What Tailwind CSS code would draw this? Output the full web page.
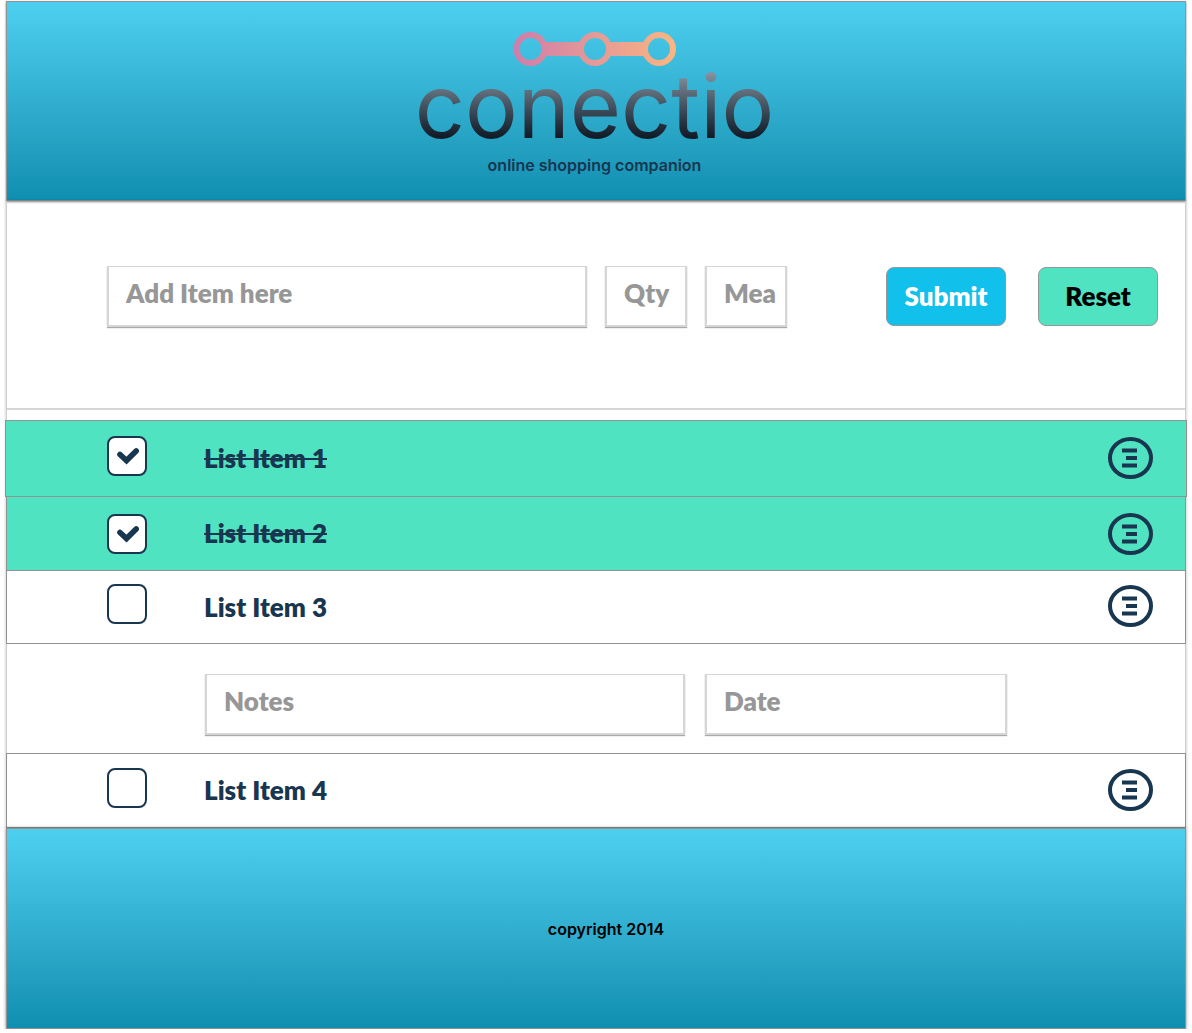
<!DOCTYPE html>
<html lang="en">
<head>
<meta charset="utf-8">
<meta name="viewport" content="width=device-width, initial-scale=1">
<title>conectio - online shopping companion</title>
<script src="https://cdn.jsdelivr.net/npm/@tailwindcss/browser@4"></script>
</head>
<body class="bg-white px-1.5 pt-px font-['Lato',sans-serif] text-[#183650]">
<svg class="hidden" aria-hidden="true">
  <symbol id="tick" viewBox="0 0 24 24"><path d="M5 10.500 11.500 16.600 21.200 7" fill="none" stroke="#183650" stroke-width="5.600" stroke-linecap="round"/></symbol>
  <symbol id="details" viewBox="0 0 45 42"><ellipse cx="22.500" cy="21" rx="20.500" ry="19" fill="none" stroke="#183650" stroke-width="4"/><path d="M14 13.500h15M18 21h11M14 28.500h15" fill="none" stroke="#183650" stroke-width="4"/></symbol>
</svg>

<header class="flex h-50 flex-col items-center border border-[#929292] bg-linear-to-b from-[#4dd0f0] to-[#0f8fb0] pt-[29px] pr-[3px] shadow-[0_1px_2px_rgba(0,0,0,0.5)]">
  <svg class="h-9 w-[164px] shrink-0" viewBox="0 0 164 36" aria-hidden="true">
    <defs><linearGradient id="link" gradientUnits="userSpaceOnUse" x1="0" y1="0" x2="164" y2="0"><stop offset="0" stop-color="#cf7dab"/><stop offset="1" stop-color="#fbb681"/></linearGradient></defs>
    <g fill="none" stroke="url(#link)" stroke-width="6">
      <circle cx="17.500" cy="18" r="14"/><circle cx="82" cy="18" r="14"/><circle cx="146" cy="18" r="14"/>
    </g>
    <path fill="url(#link)" d="M31 11h37a16 16 0 0 0 0 14h-37a16 16 0 0 0 0-14zM96 11h36a16 16 0 0 0 0 14h-36a16 16 0 0 0 0-14z"/>
  </svg>
  <h1 class="bg-linear-to-b from-[#8997a5] from-5% to-[#101c28] to-90% bg-clip-text text-[88px] leading-[78px] font-[370] text-transparent font-['Inter',sans-serif]">conectio</h1>
  <p class="mt-2 text-base leading-6 font-semibold font-['Inter',sans-serif]">online shopping companion</p>
</header>

<main class="border-x border-[#cfcfcf] shadow-[0_0_3px_rgba(0,0,0,0.25)]">
  <form class="flex h-[209px] items-start gap-[18px] border-b-2 border-[#d6d6d6] pt-[65px] pr-[27px] pl-[100px] text-[26px] font-extrabold">
    <input aria-label="Add item" placeholder="Add Item here" class="h-[61px] min-w-0 flex-1 border-2 border-t border-[#d6d6d6] pb-1.5 pl-[17px] shadow-[0_1px_1px_#aaa] placeholder:text-[#979797]">
    <input aria-label="Quantity" placeholder="Qty" class="h-[61px] w-[82px] border-2 border-t border-[#d6d6d6] pb-1.5 pl-[17px] shadow-[0_1px_1px_#aaa] placeholder:text-[#979797]">
    <input aria-label="Measure" placeholder="Mea" class="h-[61px] w-[82px] border-2 border-t border-[#d6d6d6] pb-1.5 pl-[17px] shadow-[0_1px_1px_#aaa] placeholder:text-[#979797]">
    <div class="ml-[81px] flex gap-8 pt-px">
      <button type="submit" class="h-[59px] w-[120px] rounded-lg border border-[#979797] bg-[#12c0ec] text-white">Submit</button>
      <button type="reset" class="h-[59px] w-[120px] rounded-lg border border-[#979797] bg-[#50e3c2] text-black">Reset</button>
    </div>
  </form>

  <ul class="mt-2.5 text-[26px] font-extrabold">
    <li class="-mx-0.5 flex h-[77px] items-center border border-[#929292] bg-[#50e3c2] pr-[33px] pl-[101px]">
      <span class="mb-1.5 grid place-items-center"><input id="item1" type="checkbox" checked class="col-start-1 row-start-1 size-10 appearance-none rounded-lg border-2 border-[#183650] bg-white"><svg class="pointer-events-none col-start-1 row-start-1 size-6" aria-hidden="true"><use href="#tick"/></svg></span>
      <label for="item1" class="ml-[57px] line-through decoration-2">List Item 1</label>
      <button type="button" aria-label="Details of item 1" class="mb-0.5 ml-auto"><svg class="h-[42px] w-[45px]"><use href="#details"/></svg></button>
    </li>
    <li class="-mx-px flex h-[74px] items-center border border-t-0 border-[#929292] bg-[#50e3c2] pr-8 pl-[100px]">
      <span class="grid place-items-center"><input id="item2" type="checkbox" checked class="col-start-1 row-start-1 size-10 appearance-none rounded-lg border-2 border-[#183650] bg-white"><svg class="pointer-events-none col-start-1 row-start-1 size-6" aria-hidden="true"><use href="#tick"/></svg></span>
      <label for="item2" class="ml-[57px] line-through decoration-2">List Item 2</label>
      <button type="button" aria-label="Details of item 2" class="ml-auto"><svg class="h-[42px] w-[45px]"><use href="#details"/></svg></button>
    </li>
    <li>
      <div class="-mx-px flex h-[73px] items-center border border-t-0 border-[#929292] bg-white pr-8 pl-[100px]">
        <input id="item3" type="checkbox" class="mb-1.5 size-10 appearance-none rounded-lg border-2 border-[#183650] bg-white">
        <label for="item3" class="ml-[57px]">List Item 3</label>
        <button type="button" aria-label="Details of item 3" class="mb-0.5 ml-auto"><svg class="h-[42px] w-[45px]"><use href="#details"/></svg></button>
      </div>
      <div class="flex h-[109px] gap-5 pt-[30px] pr-[178px] pl-[198px]">
        <input aria-label="Notes" placeholder="Notes" class="h-[61px] min-w-0 flex-1 border-2 border-t border-[#d6d6d6] pb-1.5 pl-[17px] shadow-[0_1px_1px_#aaa] placeholder:text-[#979797]">
        <input aria-label="Date" placeholder="Date" class="h-[61px] w-[302px] border-2 border-t border-[#d6d6d6] pb-1.5 pl-[17px] shadow-[0_1px_1px_#aaa] placeholder:text-[#979797]">
      </div>
    </li>
    <li class="-mx-px flex h-[75px] items-center border border-[#929292] bg-white pr-8 pl-[100px]">
      <input id="item4" type="checkbox" class="mb-1.5 size-10 appearance-none rounded-lg border-2 border-[#183650] bg-white">
      <label for="item4" class="ml-[57px]">List Item 4</label>
      <button type="button" aria-label="Details of item 4" class="mb-0.5 ml-auto"><svg class="h-[42px] w-[45px]"><use href="#details"/></svg></button>
    </li>
  </ul>
</main>

<footer class="flex h-[201px] items-center justify-center border border-[#929292] bg-linear-to-b from-[#4dd0f0] to-[#0f8fb0] pl-5 shadow-[0_0_3px_rgba(0,0,0,0.5)]">
  <p class="text-base leading-6 font-semibold text-black font-['Inter',sans-serif]">copyright 2014</p>
</footer>
</body>
</html>
